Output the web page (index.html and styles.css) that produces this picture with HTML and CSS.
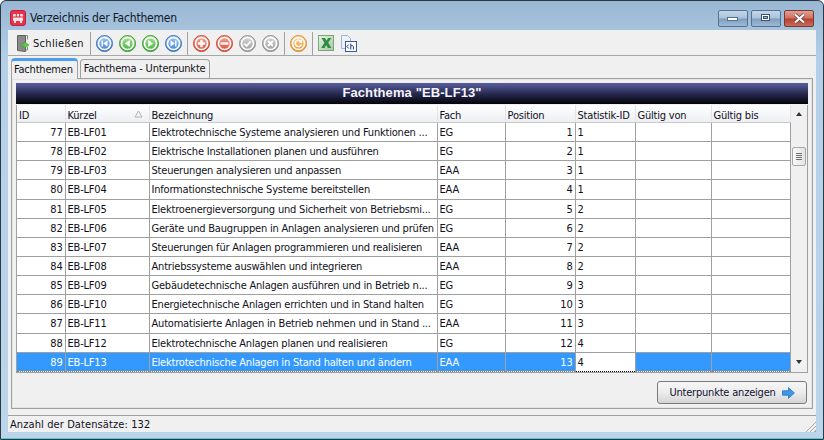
FILE: index.html
```html
<!DOCTYPE html>
<html lang="de">
<head>
  <meta charset="UTF-8">
  <title>Verzeichnis der Fachthemen</title>
  <link rel="stylesheet" href="styles.css">
</head>
<body>

<svg class="defs" width="0" height="0">
  <defs>
    <linearGradient id="gBlue" x1="0" y1="0" x2="0" y2="1"><stop offset="0" stop-color="#a9cdf3"/><stop offset="1" stop-color="#3f7fd0"/></linearGradient>
    <linearGradient id="gGreen" x1="0" y1="0" x2="0" y2="1"><stop offset="0" stop-color="#b4e8a0"/><stop offset="1" stop-color="#3fae38"/></linearGradient>
    <linearGradient id="gRed" x1="0" y1="0" x2="0" y2="1"><stop offset="0" stop-color="#f7a898"/><stop offset="1" stop-color="#dd4a34"/></linearGradient>
    <linearGradient id="gGrey" x1="0" y1="0" x2="0" y2="1"><stop offset="0" stop-color="#dcdcdc"/><stop offset="1" stop-color="#9a9a9a"/></linearGradient>
    <linearGradient id="gOrange" x1="0" y1="0" x2="0" y2="1"><stop offset="0" stop-color="#fbd49a"/><stop offset="1" stop-color="#ee9330"/></linearGradient>
    <linearGradient id="gXls" x1="0" y1="0" x2="1" y2="1"><stop offset="0" stop-color="#e6f1e2"/><stop offset="1" stop-color="#a6c8a0"/></linearGradient>
    <symbol id="ring" viewBox="0 0 17 17"><circle cx="8.5" cy="8.5" r="6" fill="none" stroke="#fff" stroke-width="1.6"/></symbol>
  </defs>
</svg>

<div class="window">
  <div class="titlebar">
    <svg class="app-icon" width="16" height="16" viewBox="0 0 16 16">
      <rect x=".5" y=".5" width="15" height="15" rx="2.5" fill="#e8344a" stroke="#c01f38"/>
      <rect x="3" y="4" width="10" height="7" rx="1" fill="#fbe3e6"/>
      <path d="M3 7h10M6.3 4v3M9.7 4v3" stroke="#c8283e" fill="none"/>
      <path d="M4 11h2v2H4zM10 11h2v2h-2z" fill="#fbe3e6"/>
    </svg>
    <span class="title">Verzeichnis der Fachthemen</span>
    <div class="win-buttons">
      <div class="win-btn"><svg width="12" height="8" viewBox="0 0 12 8"><rect x=".5" y="3.5" width="10" height="3" fill="#fff" stroke="#54708f"/></svg></div>
      <div class="win-btn"><svg width="12" height="10" viewBox="0 0 12 10"><rect x="1.5" y="1.5" width="8" height="6" fill="#fff" stroke="#3c5470"/><rect x="3.5" y="3.5" width="4" height="2" fill="#9db8d4" stroke="#3c5470"/></svg></div>
      <div class="win-btn win-close"><svg width="15" height="11" viewBox="0 0 15 11"><path d="M3 1.5l9 8M12 1.5l-9 8" stroke="#5c3a36" stroke-width="3.6"/><path d="M3 1.5l9 8M12 1.5l-9 8" stroke="#fff" stroke-width="2.2"/></svg></div>
    </div>
  </div>

  <div class="client">
    <div class="toolbar">
      <svg class="tool-close" width="14" height="19" viewBox="0 0 14 19">
        <path d="M1.5 1.5h8v16l-8-1z" fill="#8a8a86" stroke="#5f5f5c"/>
        <path d="M9.5 1.5h2v4M11.5 13v3h-2" fill="none" stroke="#8a8a86"/>
        <path d="M5 10h3V7.5l5 3.5-5 3.5V12H5z" fill="#62c64e" stroke="#3d9a32" stroke-width=".6"/>
      </svg>
      <span class="tool-label">Schließen</span>
      <span class="sep"></span>
      <svg class="tool" width="17" height="17" viewBox="0 0 17 17"><circle cx="8.5" cy="8.5" r="8" fill="url(#gBlue)" stroke="#3d74bd"/><use href="#ring"/><path d="M5.5 5.5v6h1.4v-6zM11.5 5.5l-4.3 3 4.3 3z" fill="#fff"/></svg>
      <svg class="tool" width="17" height="17" viewBox="0 0 17 17"><circle cx="8.5" cy="8.5" r="8" fill="url(#gGreen)" stroke="#3c9a35"/><use href="#ring"/><path d="M10.8 5l-5 3.5 5 3.5z" fill="#fff"/></svg>
      <svg class="tool" width="17" height="17" viewBox="0 0 17 17"><circle cx="8.5" cy="8.5" r="8" fill="url(#gGreen)" stroke="#3c9a35"/><use href="#ring"/><path d="M6.2 5l5 3.5-5 3.5z" fill="#fff"/></svg>
      <svg class="tool" width="17" height="17" viewBox="0 0 17 17"><circle cx="8.5" cy="8.5" r="8" fill="url(#gBlue)" stroke="#3d74bd"/><use href="#ring"/><path d="M11.5 5.5v6h-1.4v-6zM5.5 5.5l4.3 3-4.3 3z" fill="#fff"/></svg>
      <span class="sep"></span>
      <svg class="tool" width="17" height="17" viewBox="0 0 17 17"><circle cx="8.5" cy="8.5" r="8" fill="url(#gRed)" stroke="#cc4632"/><use href="#ring"/><path d="M7.3 4.8h2.4v2.5h2.5v2.4H9.7v2.5H7.3V9.7H4.8V7.3h2.5z" fill="#fff"/></svg>
      <svg class="tool" width="17" height="17" viewBox="0 0 17 17"><circle cx="8.5" cy="8.5" r="8" fill="url(#gRed)" stroke="#cc4632"/><use href="#ring"/><rect x="4.6" y="7.3" width="7.8" height="2.4" fill="#fff"/></svg>
      <svg class="tool" width="17" height="17" viewBox="0 0 17 17"><circle cx="8.5" cy="8.5" r="8" fill="url(#gGrey)" stroke="#8f8f8f"/><use href="#ring"/><path d="M5.3 8.6l2.3 2.4 4-4.6" fill="none" stroke="#fff" stroke-width="1.8"/></svg>
      <svg class="tool" width="17" height="17" viewBox="0 0 17 17"><circle cx="8.5" cy="8.5" r="8" fill="url(#gGrey)" stroke="#8f8f8f"/><use href="#ring"/><path d="M6 6l5 5M11 6l-5 5" fill="none" stroke="#fff" stroke-width="1.8"/></svg>
      <span class="sep"></span>
      <svg class="tool" width="17" height="17" viewBox="0 0 17 17"><circle cx="8.5" cy="8.5" r="8" fill="url(#gOrange)" stroke="#dd8a2c"/><use href="#ring"/><path d="M11.3 6.8a3.2 3.2 0 1 0 .2 2.6" fill="none" stroke="#fff" stroke-width="1.5"/><path d="M8.6 7.6l3.4.4-.4-3.2z" fill="#fff"/></svg>
      <span class="sep"></span>
      <svg class="tool" width="16" height="16" viewBox="0 0 16 16"><rect x=".5" y=".5" width="15" height="15" fill="url(#gXls)" stroke="#7ca877"/><path d="M3.500 3h3.500l1.500 2.800L10.200 3h3l-3 4.800 3.200 5.200H9.800L8.200 10l-1.700 3H3.200l3.300-5.200z" fill="#2f8a46"/></svg>
      <svg class="tool" width="17" height="17" viewBox="0 0 17 17"><path d="M1.500.5h6l3 3v10h-9z" fill="#eef3fb" stroke="#9db4d8"/><rect x="5.500" y="6.500" width="11" height="10" fill="#fff" stroke="#3a56a8"/><path d="M8.800 9.500l-2 2 2 2M10.800 8.500v6M10.800 11c2-1 2.600 0 2.600 1v2.500" fill="none" stroke="#28408f"/></svg>
    </div>

    <div class="tabs">
      <div class="tab active">Fachthemen</div>
      <div class="tab">Fachthema - Unterpunkte</div>
    </div>

    <div class="pane">
      <div class="banner">Fachthema "EB-LF13"</div>
      <div class="grid">
        <table class="data">
          <colgroup>
            <col class="c-id"><col class="c-kurz"><col class="c-bez"><col class="c-fach"><col class="c-pos"><col class="c-stat"><col class="c-von"><col class="c-bis">
          </colgroup>
          <thead>
            <tr>
              <th>ID</th>
              <th><svg class="sort" width="9" height="8" viewBox="0 0 9 8"><path d="M4.500 1L8 7H1z" fill="none" stroke="#b4b4b4"/></svg>Kürzel</th>
              <th>Bezeichnung</th>
              <th>Fach</th>
              <th>Position</th>
              <th>Statistik-ID</th>
              <th>Gültig von</th>
              <th>Gültig bis</th>
            </tr>
          </thead>
          <tbody>
            <tr><td class="num">77</td><td>EB-LF01</td><td>Elektrotechnische Systeme analysieren und Funktionen ...</td><td>EG</td><td class="num">1</td><td>1</td><td></td><td></td></tr>
            <tr><td class="num">78</td><td>EB-LF02</td><td>Elektrische Installationen planen und ausführen</td><td>EG</td><td class="num">2</td><td>1</td><td></td><td></td></tr>
            <tr><td class="num">79</td><td>EB-LF03</td><td>Steuerungen analysieren und anpassen</td><td>EAA</td><td class="num">3</td><td>1</td><td></td><td></td></tr>
            <tr><td class="num">80</td><td>EB-LF04</td><td>Informationstechnische Systeme bereitstellen</td><td>EAA</td><td class="num">4</td><td>1</td><td></td><td></td></tr>
            <tr><td class="num">81</td><td>EB-LF05</td><td>Elektroenergieversorgung und Sicherheit von Betriebsmi...</td><td>EG</td><td class="num">5</td><td>2</td><td></td><td></td></tr>
            <tr><td class="num">82</td><td>EB-LF06</td><td>Geräte und Baugruppen in Anlagen analysieren und prüfen</td><td>EG</td><td class="num">6</td><td>2</td><td></td><td></td></tr>
            <tr><td class="num">83</td><td>EB-LF07</td><td>Steuerungen für Anlagen programmieren und realisieren</td><td>EAA</td><td class="num">7</td><td>2</td><td></td><td></td></tr>
            <tr><td class="num">84</td><td>EB-LF08</td><td>Antriebssysteme auswählen und integrieren</td><td>EAA</td><td class="num">8</td><td>2</td><td></td><td></td></tr>
            <tr><td class="num">85</td><td>EB-LF09</td><td>Gebäudetechnische Anlagen ausführen und in Betrieb n...</td><td>EG</td><td class="num">9</td><td>3</td><td></td><td></td></tr>
            <tr><td class="num">86</td><td>EB-LF10</td><td>Energietechnische Anlagen errichten und in Stand halten</td><td>EG</td><td class="num">10</td><td>3</td><td></td><td></td></tr>
            <tr><td class="num">87</td><td>EB-LF11</td><td>Automatisierte Anlagen in Betrieb nehmen und in Stand ...</td><td>EAA</td><td class="num">11</td><td>3</td><td></td><td></td></tr>
            <tr><td class="num">88</td><td>EB-LF12</td><td>Elektrotechnische Anlagen planen und realisieren</td><td>EG</td><td class="num">12</td><td>4</td><td></td><td></td></tr>
            <tr class="selected"><td class="num">89</td><td>EB-LF13</td><td>Elektrotechnische Anlagen in Stand halten und ändern</td><td>EAA</td><td class="num">13</td><td class="focus">4</td><td></td><td></td></tr>
          </tbody>
        </table>
        <div class="scrollbar">
          <span class="arrow up"></span>
          <div class="thumb"><span></span><span></span><span></span><span></span></div>
          <span class="arrow down"></span>
        </div>
      </div>
      <div class="actions">
        <button class="btn-sub">Unterpunkte anzeigen
          <svg width="13" height="12" viewBox="0 0 14 14" preserveAspectRatio="none"><path d="M.5 4.500h6.500V.8l6.300 6.200-6.300 6.200V9.500H.5z" fill="#3f97e8" stroke="#2d78c8"/></svg>
        </button>
      </div>
    </div>

    <div class="statusbar">
      <span>Anzahl der Datensätze: 132</span>
      <span class="grip"></span>
    </div>
  </div>
</div>

</body>
</html>
```

FILE: styles.css
```css
body {
  margin: 0;
  width: 824px;
  height: 440px;
  overflow: hidden;
  background: #fff;
  font-family: "DejaVu Sans", Tahoma, sans-serif;
  font-stretch: condensed;
  font-size: 11px;
  letter-spacing: -0.2px;
  color: #101020;
}
.defs {
  display: block;
  height: 0;
}
.window {
  box-sizing: border-box;
  width: 824px;
  height: 440px;
  display: flex;
  flex-direction: column;
  padding: 0 7px 7px;
  border: 1px solid #2a3a44;
  border-radius: 6px 6px 0 0;
  background: linear-gradient(to bottom, #99b7d3, #b4d0e8 60px, #bbd5ea);
  box-shadow: inset 0 -1px 0 #55c8d8;
}
.titlebar {
  box-sizing: border-box;
  height: 29px;
  padding-top: 5px;
  display: flex;
  align-items: center;
  flex-shrink: 0;
}
.app-icon {
  margin: 0 4px 0 2px;
}
.title {
  font-size: 12px;
  color: #10182a;
}
.win-buttons {
  margin-left: auto;
  margin-right: 2px;
  display: flex;
  gap: 3px;
}
.win-btn {
  width: 28px;
  height: 15px;
  display: flex;
  align-items: center;
  justify-content: center;
  border: 1px solid #55718f;
  border-radius: 2px;
  background: linear-gradient(to bottom, #c4d6e8, #a8c2dc 48%, #7f9dbd 52%, #9dbad6);
}
.win-close {
  border-color: #7a3a30;
  background: linear-gradient(to bottom, #e0a094, #cf6f60 48%, #b8402e 52%, #c86a58);
}
.client {
  flex: 1;
  display: flex;
  flex-direction: column;
  background: #f0f0f0;
  min-height: 0;
}
.toolbar {
  height: 24px;
  padding-top: 1px;
  flex-shrink: 0;
  display: flex;
  align-items: center;
  padding-left: 8px;
  border-bottom: 1px solid #a8a8a8;
}
.tool-close {
  margin-right: 3px;
}
.tool-label {
  color: #101020;
  width: 55px;
  letter-spacing: 0.3px;
}
.sep {
  width: 1px;
  height: 23px;
  margin: 0 2px;
  background: #a0a0a0;
}
.tool {
  margin: 0 3px;
}
.tabs {
  height: 20px;
  margin-top: 2px;
  padding-left: 3px;
  display: flex;
  align-items: flex-end;
  gap: 2px;
  flex-shrink: 0;
}
.tab {
  box-sizing: border-box;
  height: 19px;
  line-height: 18px;
  padding: 0 4px 0 3px;
  border: 1px solid #a0a0a0;
  border-bottom: none;
  border-radius: 4px 4px 0 0;
  color: #101020;
}
.tab.active {
  height: 21px;
  margin-bottom: -1px;
  padding: 0 4px 0 2px;
  position: relative;
  background: #f0f0f0;
  border-top: 3px solid #4b9df0;
  line-height: 18px;
}
.pane {
  box-sizing: border-box;
  height: 331px;
  margin: 0 3px;
  padding: 4px 4px 0;
  border: 1px solid #a0a0a0;
  outline: 1px solid #e4e4e4;
  outline-offset: -2px;
  display: flex;
  flex-direction: column;
}
.banner {
  height: 21px;
  line-height: 20px;
  flex-shrink: 0;
  text-align: center;
  font-family: "Liberation Sans", Arial, sans-serif;
  font-stretch: normal;
  font-size: 13px;
  letter-spacing: 0.1px;
  font-weight: bold;
  color: #f4f4fa;
  background: linear-gradient(to bottom, #595f9e, #24264a 55%, #04040a);
}
.grid {
  height: 267px;
  margin-top: 1px;
  flex-shrink: 0;
  display: flex;
  border: 1px solid #a0a0a0;
  border-top: none;
  background: #f0f0f0;
}
.data {
  width: 773px;
  table-layout: fixed;
  border-collapse: collapse;
  font-size: 11px;
}
.c-id { width: 48px; }
.c-kurz { width: 84px; }
.c-bez { width: 288px; }
.c-fach { width: 68px; }
.c-pos { width: 70px; }
.c-stat { width: 60px; }
.c-von { width: 76px; }
.c-bis { width: 79px; }
.data th {
  height: 14px;
  padding: 3px 2px 0;
  text-align: left;
  font-weight: normal;
  white-space: nowrap;
  color: #101020;
  background: linear-gradient(to bottom, #fff, #f6f7f9 50%, #eceef1);
  border-right: 1px solid #e2e4e8;
  border-bottom: 1px solid #c8c8c8;
}
.sort {
  float: right;
  margin: 1px 4px 0 0;
}
.data td {
  height: 17px;
  padding: 1px 2px 0;
  background: #fff;
  white-space: nowrap;
  overflow: hidden;
  border: 1px solid #a0a0a0;
  border-left: none;
  color: #101020;
}
.data td.num {
  text-align: right;
}
.data .selected td {
  background: #3399ff;
  color: #fff;
  border-top: 1px dotted #d07a20;
  border-bottom: 1px dotted #d07a20;
}
.data .selected td.focus {
  background: #fff;
  color: #101020;
  border-top: 1px dotted #000;
  border-bottom: 1px dotted #000;
}
.scrollbar {
  flex: 1;
  display: flex;
  flex-direction: column;
  align-items: center;
  background: #f0f0f0;
}
.arrow {
  width: 0;
  height: 0;
  border-left: 3px solid transparent;
  border-right: 3px solid transparent;
}
.arrow.up {
  margin-top: 7px;
  border-bottom: 4px solid #333;
}
.arrow.down {
  margin-top: auto;
  margin-bottom: 8px;
  border-top: 4px solid #333;
}
.thumb {
  box-sizing: border-box;
  width: 14px;
  height: 19px;
  margin-top: 31px;
  display: flex;
  flex-direction: column;
  align-items: center;
  justify-content: center;
  gap: 1px;
  border: 1px solid #a8a8a8;
  border-radius: 2px;
  background: linear-gradient(to right, #f8f8f8, #e4e4e4);
}
.thumb span {
  width: 6px;
  height: 1px;
  background: #707070;
}
.actions {
  display: flex;
  justify-content: flex-end;
  margin-top: 8px;
  padding-right: 1px;
}
.btn-sub {
  box-sizing: border-box;
  width: 150px;
  height: 23px;
  display: flex;
  align-items: center;
  justify-content: center;
  gap: 6px;
  padding: 0;
  border: 1px solid #7a7a7a;
  border-radius: 3px;
  font-family: inherit;
  font-stretch: inherit;
  letter-spacing: inherit;
  font-size: 11px;
  color: #101030;
  background: linear-gradient(to bottom, #f6f6f6, #ececec 50%, #d4d4d4);
}
.statusbar {
  flex: 1;
  display: flex;
  align-items: center;
  justify-content: space-between;
  margin-top: 6px;
  border-top: 1px solid #a0a0a0;
  padding-left: 2px;
  letter-spacing: 0.1px;
}
.grip {
  width: 11px;
  height: 11px;
  align-self: flex-end;
  background: repeating-linear-gradient(135deg, transparent 0 2px, #a8a8a8 2px 3px);
  clip-path: polygon(100% 0, 100% 100%, 0 100%);
}
```
